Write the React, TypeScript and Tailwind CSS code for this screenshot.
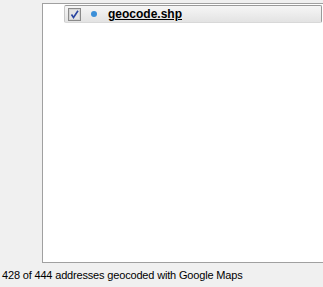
export default function App() {
  return (
    <div className="w-[323px] h-[287px] bg-[#f0f0f0] flex flex-col overflow-hidden font-['Liberation_Sans',Arial,sans-serif] text-black">
      <div className="flex flex-1 min-h-0 pt-[3px]">
        <div className="w-[42px] shrink-0" />
        <div className="flex-1 bg-white border-l border-t border-b border-[#a0a0a0] pt-px">
          {/* layer row */}
          <div className="ml-[21px] mr-px h-[18px] flex items-center rounded-[2px] border border-[#9a9a9a] border-b-[#d8d8d8] border-l-[#c8c8c8] bg-gradient-to-b from-[#f6f6f6] to-[#e3e3e3]">
            <svg width="13" height="13" viewBox="0 0 13 13" className="ml-[3px] shrink-0">
              <rect x="0.5" y="0.5" width="12" height="12" fill="#f4f4f4" stroke="#8a8a8a" />
              <rect x="1.5" y="1.5" width="10" height="10" fill="#e4e4e4" stroke="#d4d4d4" />
              <path d="M3.5 6.5 L5.5 9.5 L10 2.8" fill="none" stroke="#2a45a0" strokeWidth="1.6" />
            </svg>
            <span className="ml-[10px] w-[6px] h-[6px] rounded-full bg-[#3b8fd8] shrink-0" />
            <span className="ml-[11px] text-[12px] font-bold underline underline-offset-[1px] leading-none">geocode.shp</span>
          </div>
        </div>
      </div>
      <div className="h-[24px] shrink-0 flex items-center pl-[2px] text-[11px] tracking-[-0.17px]">
        428 of 444 addresses geocoded with Google Maps
      </div>
    </div>
  );
}
